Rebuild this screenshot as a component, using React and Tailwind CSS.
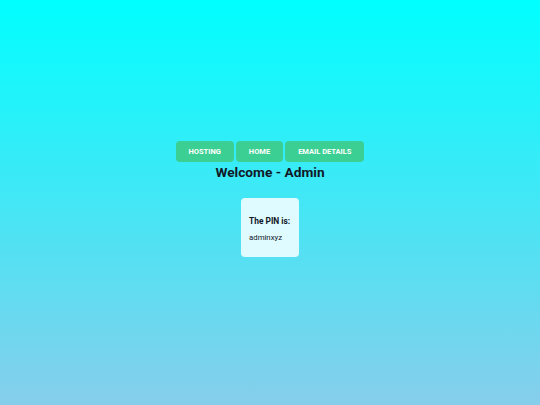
export default function App() {
  const links = ['HOSTING', 'HOME', 'EMAIL DETAILS'];
  return (
    <div
      className="min-h-screen flex flex-col items-center justify-center pb-[7px] bg-linear-to-b/srgb from-[#00ffff] to-[#87ceeb] text-[#111827]"
      style={{ fontFamily: 'Roboto, "Noto Sans", sans-serif' }}
    >
      <nav className="flex gap-[2px]">
        {links.map((l) => (
          <button
            key={l}
            className="h-[21px] px-[13px] rounded-[4px] bg-[#3ccf93] text-white text-[7.5px] font-bold"
          >
            {l}
          </button>
        ))}
      </nav>
      <h1 className="text-[13.7px] font-bold leading-[16px] mt-[2px]">Welcome - Admin</h1>
      <div className="mt-[18px] w-[58px] h-[59px] rounded-[4px] bg-[#e0fbff] flex flex-col justify-center pl-[8px] pt-[4px]">
        <p className="text-[8.4px] font-bold leading-none">The PIN is:</p>
        <p className="text-[7.8px] leading-none mt-[9px]">adminxyz</p>
      </div>
    </div>
  );
}
